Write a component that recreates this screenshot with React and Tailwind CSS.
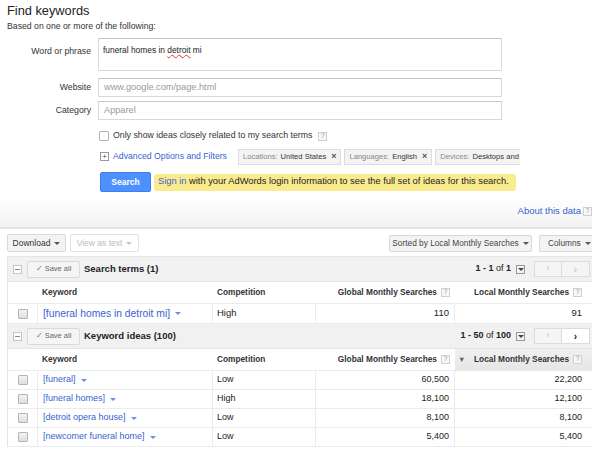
import React from "react";

const Caret = ({ color = "border-t-[#666]" }) => (
  <span className={`inline-block w-0 h-0 border-l-[3px] border-r-[3px] border-t-[3px] border-l-transparent border-r-transparent ${color}`} />
);

const Help = () => (
  <span className="inline-flex items-center justify-center w-[9px] h-[9px] border border-[#d0d0d0] bg-[#f7f7f7] text-[6.5px] leading-none text-[#999] font-normal">?</span>
);

const Check = () => (
  <span className="inline-block w-[10px] h-[10px] border border-[#b5b5b5] bg-gradient-to-b from-[#f4f4f4] to-[#dedede] rounded-[1px]" />
);

const MinusBox = () => (
  <span className="inline-flex items-center justify-center w-[9px] h-[9px] border border-[#c4c4c4] bg-white">
    <span className="block w-[5px] h-[1px] bg-[#888]" />
  </span>
);

const Chip = ({ label, value, close = true, clip = false }) => (
  <div className={`flex items-center h-[16px] border border-[#dcdcdc] bg-[#f3f3f3] px-[4px] text-[7.6px] whitespace-nowrap overflow-hidden ${clip ? "border-r-0 w-[85px]" : ""}`}>
    <span className="text-[#888]">{label}</span>
    <span className="text-[#333] ml-[3px]">{value}</span>
    {close && <span className="ml-[5px] text-[#555] font-bold text-[9px] leading-none">×</span>}
  </div>
);

const SaveAll = () => (
  <div className="flex items-center justify-center w-[53px] h-[17px] border border-[#dadada] bg-[#f5f5f5] rounded-[2px] text-[7.5px] text-[#666] ml-[5px]">
    <span className="text-[#777] mr-[2px] text-[8px]">✓</span>Save all
  </div>
);

const Pager = ({ a, b, total, nextOn }) => (
  <div className="ml-auto flex items-center mr-[1px]">
    <span className="text-[9px] text-[#222]">
      <b>{a} - {b}</b> of <b>{total}</b>
    </span>
    <span className="ml-[5px] inline-flex items-center justify-center w-[9px] h-[9px] border border-[#999] bg-[#f4f4f4]">
      <Caret color="border-t-[#444]" />
    </span>
    <div className="ml-[9px] flex">
      <div className="w-[28px] h-[16px] border border-[#dcdcdc] bg-[#f5f5f5] flex items-center justify-center text-[9px] text-[#bbb]">‹</div>
      <div className={`w-[28px] h-[16px] border border-l-0 border-[#dcdcdc] flex items-center justify-center text-[10px] ${nextOn ? "bg-white text-[#222] font-bold" : "bg-[#f5f5f5] text-[#bbb]"}`}>›</div>
    </div>
  </div>
);

const cols = "grid grid-cols-[30px_175px_103px_139px_137px]";

const ColHeader = ({ sorted }) => (
  <div className={`${cols} h-[22px] bg-white border-b border-[#ebebeb] text-[8.3px] font-bold text-[#333]`}>
    <div />
    <div className="flex items-center pl-[4px]">Keyword</div>
    <div className="flex items-center pl-[4px]">Competition</div>
    <div className="flex items-center justify-end pr-[5px] gap-[4px]">Global Monthly Searches <Help /></div>
    <div className={`flex items-center pr-[10px] gap-[4px] ${sorted ? "bg-gradient-to-b from-[#f0f0f0] to-[#e6e6e6]" : ""}`}>
      {sorted && <span className="ml-[3px] text-[7.5px] text-[#666]">▼</span>}
      <span className="ml-auto">Local Monthly Searches</span> <Help />
    </div>
  </div>
);

const Row = ({ kw, comp, g, l, big, h = "h-[19px]" }) => (
  <div className={`${cols} ${h} border-b border-[#ebebeb] bg-white`}>
    <div className="flex items-center justify-center border-r border-[#ebebeb]"><Check /></div>
    <div className={`flex items-center pl-[5px] border-r border-[#ebebeb] text-[#3b5fcf] ${big ? "text-[10.3px]" : "text-[9px]"}`}>
      {kw}
      <span className="ml-[5px] flex"><Caret color="border-t-[#6b8fe0]" /></span>
    </div>
    <div className={`flex items-center pl-[4px] border-r border-[#ebebeb] text-[#222] ${big ? "text-[9.5px]" : "text-[9px]"}`}>{comp}</div>
    <div className={`flex items-center justify-end pr-[5px] border-r border-[#ebebeb] text-[#222] ${big ? "text-[9.5px]" : "text-[9px]"}`}>{g}</div>
    <div className={`flex items-center justify-end pr-[10px] text-[#222] ${big ? "text-[9.5px]" : "text-[9px]"}`}>{l}</div>
  </div>
);

const SectionHeader = ({ title, pager }) => (
  <div className="flex items-center h-[25px] bg-[#f1f1f1] border-b border-[#e5e5e5] pl-[5px] pr-[1px]">
    <MinusBox />
    <SaveAll />
    <span className="ml-[4px] text-[9.5px] font-bold text-[#222]">{title}</span>
    {pager}
  </div>
);

export default function App() {
  return (
    <div className="w-[592px] h-[455px] overflow-hidden bg-white font-['Liberation_Sans',Arial,sans-serif] text-[#222]">
      <div className="pl-[7px] pt-[3px]">
        <div className="text-[12.8px] leading-[16px] text-[#222]">Find keywords</div>
        <div className="text-[8.7px] leading-[11px] mt-[2px] text-[#333]">Based on one or more of the following:</div>
      </div>

      <div className="mt-[6px] flex flex-col">
        <div className="flex">
          <div className="w-[91px] text-right text-[8.7px] text-[#333] pt-[7px]">Word or phrase</div>
          <div className="ml-[7px] w-[404px] h-[33px] border border-[#d9d9d9] border-t-[#c6c6c6] px-[4px] pt-[5px] text-[8.4px] text-[#222]">
            funeral homes in <span className="underline decoration-wavy decoration-[#e33] decoration-[0.5px]">detroit</span> mi
          </div>
        </div>
        <div className="flex mt-[7px] items-center">
          <div className="w-[91px] text-right text-[8.7px] text-[#333]">Website</div>
          <div className="ml-[7px] w-[404px] h-[19px] border border-[#d9d9d9] border-t-[#c6c6c6] px-[5px] flex items-center text-[9.2px] text-[#9a9a9a]">www.google.com/page.html</div>
        </div>
        <div className="flex mt-[4px] items-center">
          <div className="w-[91px] text-right text-[8.7px] text-[#333]">Category</div>
          <div className="ml-[7px] w-[404px] h-[19px] border border-[#d9d9d9] border-t-[#c6c6c6] px-[5px] flex items-center text-[9.2px] text-[#9a9a9a]">Apparel</div>
        </div>

        <div className="flex items-center mt-[10px] pl-[99px] h-[12px]">
          <span className="inline-block w-[10px] h-[10px] border border-[#b0b0b0] bg-white rounded-[1px]" />
          <span className="ml-[4px] text-[8.75px] text-[#333]">Only show ideas closely related to my search terms</span>
          <span className="ml-[6px] flex"><Help /></span>
        </div>

        <div className="flex items-center mt-[6px] pl-[100px] h-[17px]">
          <span className="inline-flex items-center justify-center w-[9px] h-[9px] border border-[#999] bg-white text-[8px] leading-none text-[#555]">+</span>
          <span className="ml-[4px] text-[8.7px] text-[#3b5fcf]">Advanced Options and Filters</span>
          <div className="ml-[11px] flex gap-[3px]">
            <Chip label="Locations:" value="United States" />
            <Chip label="Languages:" value="English" />
            <Chip label="Devices:" value="Desktops and" close={false} clip />
          </div>
        </div>

        <div className="flex items-center mt-[7px] pl-[100px]">
          <div className="w-[51px] h-[20px] bg-[#4d90fe] border border-[#3f7ff0] rounded-[2px] flex items-center justify-center text-white font-bold text-[8.5px]">Search</div>
          <div className="ml-[3px] w-[362px] h-[17px] bg-[#fbeb8f] rounded-[3px] flex items-center pl-[4px] text-[9.3px] text-[#222] whitespace-nowrap">
            <span className="text-[#3b5fcf]">Sign in</span>&nbsp;with your AdWords login information to see the full set of ideas for this search.
          </div>
        </div>
      </div>

      <div className="mt-[4px] h-[31px] bg-gradient-to-b from-white to-[#f3f3f3] flex items-center justify-end">
        <span className="text-[9.5px] text-[#3b5fcf]">About this data</span>
        <span className="ml-[2px] flex"><Help /></span>
      </div>
      <div className="h-[2px] bg-[#dfe8db]" />

      <div className="flex items-center mt-[5px] pl-[7px] h-[18px]">
        <div className="w-[59px] h-[18px] border border-[#d9d9d9] bg-[#f3f3f3] rounded-[2px] flex items-center justify-center text-[8.5px] text-[#333] gap-[4px]">
          Download <Caret color="border-t-[#555]" />
        </div>
        <div className="ml-[4px] w-[69px] h-[18px] border border-[#e3e3e3] bg-white rounded-[2px] flex items-center justify-center text-[8.5px] text-[#bbb] gap-[4px]">
          View as text <Caret color="border-t-[#c4c4c4]" />
        </div>
        <div className="ml-auto w-[143px] h-[17px] border border-[#d9d9d9] bg-[#f3f3f3] rounded-[2px] flex items-center justify-center text-[8.3px] text-[#444] gap-[4px]">
          Sorted by Local Monthly Searches <Caret color="border-t-[#555]" />
        </div>
        <div className="ml-[7px] w-[56px] h-[17px] border border-[#d9d9d9] border-r-0 bg-[#f3f3f3] rounded-l-[2px] flex items-center pl-[8px] text-[8.3px] text-[#444] gap-[4px] -mr-[3px]">
          Columns <Caret color="border-t-[#555]" />
        </div>
      </div>

      <div className="mt-[4px] ml-[7px] w-[585px] border-l border-t border-[#e5e5e5]">
        <SectionHeader title="Search terms (1)" pager={<Pager a="1" b="1" total="1" />} />
        <ColHeader />
        <Row kw="[funeral homes in detroit mi]" comp="High" g="110" l="91" big h="h-[20px]" />
        <SectionHeader title="Keyword ideas (100)" pager={<Pager a="1" b="50" total="100" nextOn />} />
        <ColHeader sorted />
        <Row kw="[funeral]" comp="Low" g="60,500" l="22,200" />
        <Row kw="[funeral homes]" comp="High" g="18,100" l="12,100" />
        <Row kw="[detroit opera house]" comp="Low" g="8,100" l="8,100" />
        <Row kw="[newcomer funeral home]" comp="Low" g="5,400" l="5,400" />
      </div>
    </div>
  );
}
